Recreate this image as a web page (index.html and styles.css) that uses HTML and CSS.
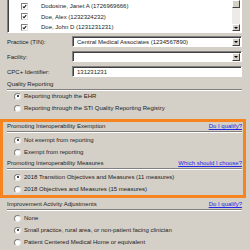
FILE: index.html
```html
<!DOCTYPE html>
<html lang="en">
<head>
    <meta charset="UTF-8">
    <title>Clinician Reporting Options</title>
    <link rel="stylesheet" href="styles.css">
</head>
<body>
    <div class="dialog">
        <!-- Clinician list -->
        <div class="list">
            <div class="list-rows">
                <div class="list-row"><span class="check"><svg viewBox="0 0 6 6"><path d="M1 3 L2.4 4.5 L5 1.3" /></svg></span>Dodosine, Janet A (1726969666)</div>
                <div class="list-row"><span class="check"><svg viewBox="0 0 6 6"><path d="M1 3 L2.4 4.5 L5 1.3" /></svg></span>Doe, Alex (1232324232)</div>
                <div class="list-row"><span class="check"><svg viewBox="0 0 6 6"><path d="M1 3 L2.4 4.5 L5 1.3" /></svg></span>Doe, John D (1231231231)</div>
            </div>
            <div class="scrollbar">
                <div class="thumb"></div>
                <div class="track"></div>
                <div class="scroll-btn"><span class="arrow"></span></div>
            </div>
        </div>

        <div class="field-row">
            <span class="field-label">Practice (TIN):</span>
            <div class="combo">
                <span class="combo-text">Central Medical Associates (1234567890)</span>
                <span class="scroll-btn"><span class="arrow"></span></span>
            </div>
        </div>
        <div class="field-row">
            <span class="field-label">Facility:</span>
            <div class="combo">
                <span class="combo-text"></span>
                <span class="scroll-btn"><span class="arrow"></span></span>
            </div>
        </div>
        <div class="field-row">
            <span class="field-label">CPC+ Identifier:</span>
            <div class="combo">
                <span class="combo-text">131231231</span>
            </div>
        </div>

        <div class="group-head first"><span>Quality Reporting</span></div>
        <div class="radios flush">
            <div class="radio-row"><span class="radio on"></span>Reporting through the EHR</div>
            <div class="radio-row"><span class="radio"></span>Reporting through the STI Quality Reporting Registry</div>
        </div>

        <!-- Highlighted section -->
        <div class="highlight">
            <div class="group-head top"><span>Promoting Interoperability Exemption</span><a href="#">Do I qualify?</a></div>
            <div class="radios">
                <div class="radio-row"><span class="radio on"></span>Not exempt from reporting</div>
                <div class="radio-row"><span class="radio"></span>Exempt from reporting</div>
            </div>
            <div class="group-head"><span>Promoting Interoperability Measures</span><a href="#">Which should I choose?</a></div>
            <div class="radios">
                <div class="radio-row"><span class="radio on"></span>2018 Transition Objectives and Measures (11 measures)</div>
                <div class="radio-row"><span class="radio"></span>2018 Objectives and Measures (15 measures)</div>
            </div>
        </div>

        <div class="group-head after"><span>Improvement Activity Adjustments</span><a href="#">Do I qualify?</a></div>
        <div class="radios">
            <div class="radio-row"><span class="radio"></span>None</div>
            <div class="radio-row"><span class="radio on"></span>Small practice, rural area, or non-patient facing clinician</div>
            <div class="radio-row"><span class="radio"></span>Patient Centered Medical Home or equivalent</div>
            <div class="radio-row"><span class="radio"></span>Other reportable activity</div>
        </div>
    </div>
</body>
</html>
```

FILE: styles.css
```css
body {
    margin: 0;
    background-color: #d4d0c8; /* classic dialog gray */
    font-family: "Liberation Sans", Arial, sans-serif;
    font-size: 6px;
    color: #222;
    overflow: hidden;
}
.dialog {
    padding: 0 8px 0 7px;
    height: 250px;
}

/* clinician list */
.list {
    display: flex;
    margin-top: -2px;
    height: 35px;
    background: #fff;
    border: 1px solid;
    border-color: #808080 #fff #fff #808080;
    box-shadow: inset 1px 1px #404040;
    box-sizing: border-box;
}
.list-rows {
    flex: 1;
    padding-top: 2px;
}
.list-row {
    display: flex;
    align-items: center;
    height: 10.5px;
    padding-left: 13px;
}
.check {
    width: 5px;
    height: 5px;
    margin-right: 13px;
    background: #fff;
    border: 1px solid;
    border-color: #808080 #e0e0e0 #e0e0e0 #808080;
    display: flex;
}
.check svg {
    width: 5px;
    height: 5px;
    fill: none;
    stroke: #111;
    stroke-width: 1.3;
}
.scrollbar {
    width: 8px;
    display: flex;
    flex-direction: column;
    padding: 1px 1px 1px 0;
}
.thumb {
    height: 8px;
    background: #d4d0c8;
    border: 1px solid;
    border-color: #fff #404040 #404040 #fff;
    box-sizing: border-box;
}
.track {
    flex: 1;
    background: #ecebe8;
}
.scroll-btn {
    width: 8px;
    height: 7px;
    background: #d4d0c8;
    border: 1px solid;
    border-color: #fff #404040 #404040 #fff;
    box-sizing: border-box;
    display: flex;
    align-items: center;
    justify-content: center;
}
.arrow {
    width: 0;
    height: 0;
    border-left: 2px solid transparent;
    border-right: 2px solid transparent;
    border-top: 2px solid #000;
}

/* form fields */
.field-row {
    display: flex;
    align-items: center;
    margin-top: 3px;
}
.field-row + .field-row {
    margin-top: 4px;
}
.field-label {
    width: 65px;
}
.combo {
    flex: 1;
    display: flex;
    align-items: center;
    height: 11px;
    background: #fff;
    border: 1px solid;
    border-color: #808080 #fff #fff #808080;
    box-shadow: inset 1px 1px #404040;
    box-sizing: border-box;
    padding: 1px 1px 1px 4px;
}
.combo-text {
    flex: 1;
}
.combo .scroll-btn {
    height: 8px;
}

/* group headings with etched line */
.group-head {
    display: flex;
    justify-content: space-between;
    align-items: center;
    height: 10px;
    border-bottom: 1px solid #808080;
    box-shadow: 0 1px 0 #fff;
}
.group-head.first {
    margin-top: 2px;
}
.group-head.top {
    margin-top: -1px;
}
.group-head.after {
    margin-top: 1px;
}
.group-head a {
    color: #2626e8;
    text-decoration: underline;
}

.radios {
    padding-top: 2px;
}
.radios.flush {
    padding-top: 0;
}
.radio-row {
    display: flex;
    align-items: center;
    height: 12px;
    padding-left: 7px;
}
.radio {
    width: 5px;
    height: 5px;
    border-radius: 50%;
    background: #fff;
    border: 1px solid;
    border-color: #808080 #e8e8e8 #e8e8e8 #808080;
    margin-right: 3px;
    display: flex;
    align-items: center;
    justify-content: center;
}
.radio.on::after {
    content: "";
    width: 2px;
    height: 2px;
    border-radius: 50%;
    background: #111;
}

/* orange highlight around the interoperability section */
.highlight {
    margin: 5px -4px 0 -7px;
    padding: 0 1px 0 4px;
    border: 3px solid #f7841f;
}
```
